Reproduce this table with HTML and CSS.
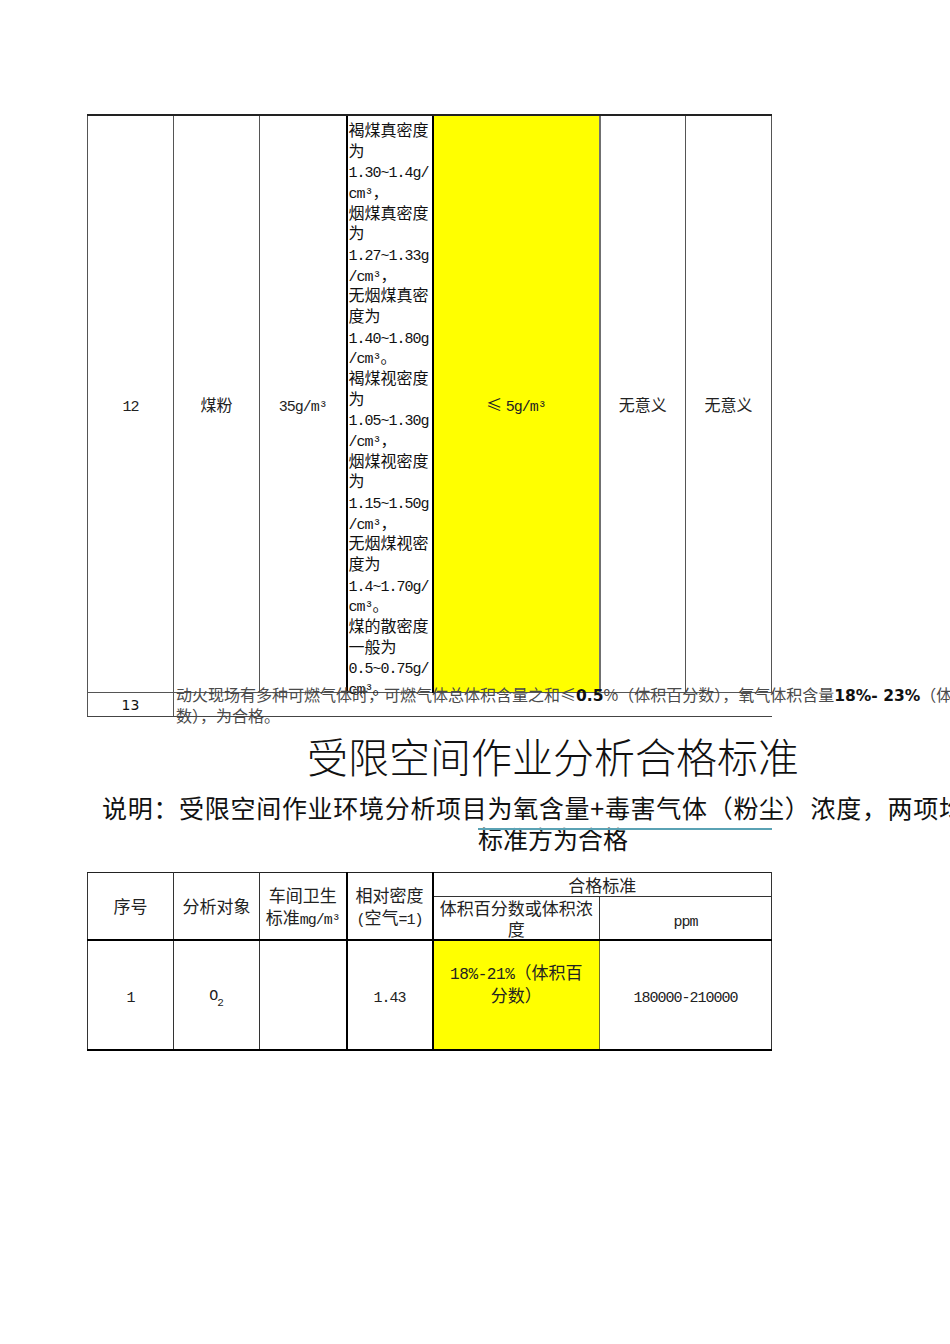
FILE: index.html
```html
<!DOCTYPE html>
<html lang="zh-CN">
<head>
<meta charset="utf-8">
<title>受限空间作业分析合格标准</title>
<link rel="stylesheet" href="styles.css">
</head>
<body>
<div class="page">
  <table class="t1">
    <colgroup>
      <col class="w86"><col class="w86"><col class="w87"><col class="w86"><col class="w167"><col class="w86"><col class="w86">
    </colgroup>
    <tr class="r12">
      <td><span class="m">12</span></td>
      <td>煤粉</td>
      <td><span class="m">35g/m³</span></td>
      <td class="desc thick"><div class="descin">褐煤真密度<br>为<br><span class="m">1.30~1.4g/</span><br><span class="m">cm³</span>，<br>烟煤真密度<br>为<br><span class="m">1.27~1.33g</span><br><span class="m">/cm³</span>，<br>无烟煤真密<br>度为<br><span class="m">1.40~1.80g</span><br><span class="m">/cm³</span>。<br>褐煤视密度<br>为<br><span class="m">1.05~1.30g</span><br><span class="m">/cm³</span>，<br>烟煤视密度<br>为<br><span class="m">1.15~1.50g</span><br><span class="m">/cm³</span>，<br>无烟煤视密<br>度为<br><span class="m">1.4~1.70g/</span><br><span class="m">cm³</span>。<br>煤的散密度<br>一般为<br><span class="m">0.5~0.75g/</span><br><span class="m">cm³</span>。</div></td>
      <td class="yel thick">≤ <span class="m">5g/m³</span></td>
      <td class="c6">无意义</td>
      <td>无意义</td>
    </tr>
    <tr class="r13">
      <td class="n13">13</td>
      <td colspan="6" class="long"><div class="longin">动火现场有多种可燃气体时，可燃气体总体积含量之和≤<b>0.5</b>%（体积百分数），氧气体积含量<b>18%- 23%</b>（体积百分<br>数），为合格。</div></td>
    </tr>
  </table>

  <div class="cap">
    <h1 class="title">受限空间作业分析合格标准</h1>
    <p class="note"><span class="l1">说明：受限空间作业环境分析项目为氧含量+毒害气体（粉尘）浓度，两项均达到</span><span class="l2">标准方为合格</span></p>
    <div class="sel"></div>
  </div>

  <table class="t2">
    <colgroup>
      <col class="w86"><col class="w86"><col class="w87"><col class="w86"><col class="w167"><col class="w172">
    </colgroup>
    <tr class="h1">
      <td rowspan="2">序号</td>
      <td rowspan="2">分析对象</td>
      <td rowspan="2">车间卫生<br>标准<span class="m">mg/m³</span></td>
      <td rowspan="2" class="thick">相对密度<br><span class="m">(</span>空气<span class="m">=1)</span></td>
      <td colspan="2" class="thick">合格标准</td>
    </tr>
    <tr class="h2">
      <td class="thick">体积百分数或体积浓<br>度</td>
      <td><span class="m">ppm</span></td>
    </tr>
    <tr class="d">
      <td><span class="m">1</span></td>
      <td><span class="m">O</span><sub class="m">2</sub></td>
      <td></td>
      <td class="thick"><span class="m">1.43</span></td>
      <td class="yel thick top"><span class="m">18%-21%</span>（体积百<br>分数）</td>
      <td><span class="m">180000-210000</span></td>
    </tr>
  </table>
</div>
</body>
</html>
```

FILE: styles.css
```css
html {
  overflow: hidden;
  background: #fff;
}
body {
  margin: 0;
  font-family: "Noto Sans CJK SC", sans-serif;
  color: #222;
}
.page {
  padding: 114px 0 0 87px;
}
table {
  border-collapse: collapse;
  table-layout: fixed;
}
.w86 { width: 86px; }
.w87 { width: 87px; }
.w167 { width: 167px; }
.w172 { width: 172px; }
td {
  padding: 0;
  text-align: center;
  vertical-align: middle;
  font-size: 16px;
  line-height: 20px;
  border: 1px solid #555;
}
.m {
  font-family: "Liberation Mono", monospace;
  font-size: 15px;
  line-height: 12px;
  letter-spacing: -1px;
}

/* top table */
.t1 {
  width: 685px;
}
.r12 td {
  height: 576px;
  border-top: 2px solid #222;
}
.thick {
  border-left: 2px solid #000;
}
.yel {
  background: #ffff00;
}
.t1 .yel {
  border-right: 1px solid #8c8c3c;
}
.c6 {
  border-left: 2px solid #707070;
}
.r12 .desc {
  height: 573px;
  text-align: left;
  vertical-align: top;
  padding: 3px 0 0 1px;
}
.descin {
  height: 560px;
  line-height: 20.67px;
  white-space: nowrap;
  color: #111;
}
.r13 td {
  height: 23px;
  border-bottom: 1px solid #444;
}
.n13 {
  font-family: "DejaVu Sans", sans-serif;
  font-size: 14px;
  color: #111;
}
.long {
  text-align: left;
  vertical-align: top;
  padding-left: 2px;
  white-space: nowrap;
  color: #4a4a4a;
}
.t1 .long {
  border-right: 0 none;
}
.longin {
  height: 10px;
  margin-top: -9px;
  line-height: 21px;
}
.longin b {
  font-family: "DejaVu Sans", sans-serif;
  font-weight: bold;
  font-size: 15.5px;
  line-height: 12px;
  color: #111;
}

/* captions */
.cap {
  position: relative;
  padding-top: 14px;
  width: 932px;
}
.title {
  margin: 0;
  font-size: 41px;
  line-height: 48px;
  font-weight: 300;
  text-align: center;
  color: #111;
}
.note {
  margin: 13px 0 0;
  font-size: 25px;
  line-height: 31px;
  color: #111;
}
.l1 {
  display: block;
  padding-left: 15px;
  letter-spacing: 0.7px;
  white-space: nowrap;
}
.l2 {
  display: block;
  text-align: center;
}
.sel {
  position: absolute;
  left: 391px;
  top: 111px;
  width: 294px;
  height: 2px;
  background: #5aa2b4;
}

/* bottom table */
.t2 {
  margin-top: 18px;
  width: 685px;
}
.t2 td {
  font-size: 17px;
  line-height: 22px;
  border-color: #333;
}
.t2 .thick {
  border-left: 2px solid #000;
}
.h1 td {
  height: 23px;
  border-top: 1px solid #222;
}
.h2 td {
  height: 42px;
  line-height: 21px;
  border-bottom: 2px solid #000;
}
.t2 .h1 td[rowspan] {
  border-bottom: 2px solid #000;
}
.d td {
  height: 108px;
  border-bottom: 2px solid #000;
}
.d .yel {
  border-right: 1px solid #6f6f2a;
}
.t2 .d .top {
  height: 89px;
  vertical-align: top;
  padding-top: 19px;
  line-height: 23px;
}
.top .m {
  font-size: 16px;
  letter-spacing: -0.4px;
}
sub.m {
  font-size: 11px;
  vertical-align: -6px;
  letter-spacing: 0;
}
```
